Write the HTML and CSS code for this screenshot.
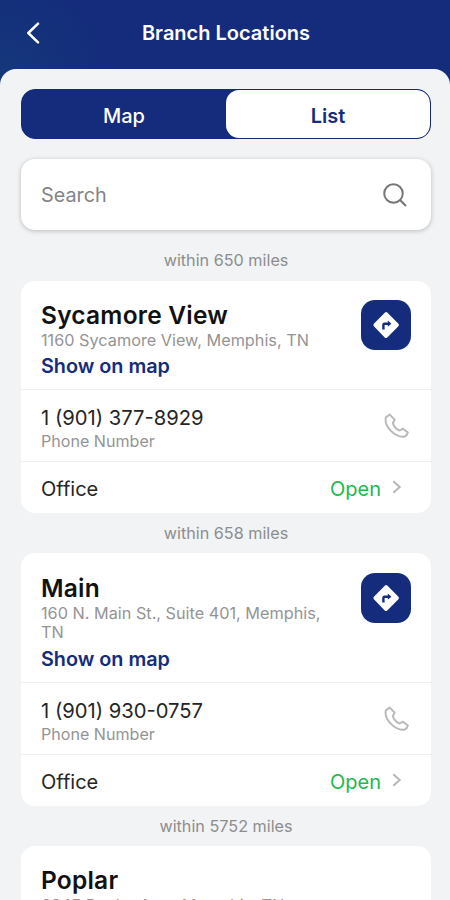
FILE: index.html
```html
<!DOCTYPE html>
<html lang="en">
<head>
<meta charset="utf-8">
<title>Branch Locations</title>
<link rel="stylesheet" href="styles.css">
</head>
<body>
<svg class="defs" aria-hidden="true">
  <symbol id="directions" viewBox="0 0 50 50"><path d="M24 12.6 12.9 23.7q-1.2 1.3 0 2.6L23.7 37.4q1.3 1.2 2.6 0L37.4 26.3q1.2-1.3 0-2.6L26.3 12.6q-1.2-1.1-2.3 0z" fill="#fff"/><path d="M22.4 29.5v-4.6q0-1.2 1.2-1.2h4" fill="none" stroke="#142c7b" stroke-width="2.4"/><path d="M26.8 20.6 30.4 23.7 26.8 26.8z" fill="#142c7b"/></symbol>
  <symbol id="phone" viewBox="0 0 24 24"><path d="M5.5 1.5 1.8 4.2C-.2 12.6 10.8 24.2 20 22.5q2.2-1 2.9-3.8l-4.6-3.6-3.2 1.7c-2.8-1-5.8-4.2-6.6-7l1.7-3.4z" fill="none" stroke="#b9b9b9" stroke-width="1.9" stroke-linejoin="round"/></symbol>
  <symbol id="chevron" viewBox="0 0 10 14"><path d="m1.3 1.3 6.4 5.7-6.4 5.7" fill="none" stroke="#b7b7b7" stroke-width="2"/></symbol>
</svg>
<div class="screen">
  <header class="header">
    <svg class="back" viewBox="0 0 14 22"><path d="m12 1.7-9.7 9.3 9.7 9.3" fill="none" stroke="#fff" stroke-width="2.5" stroke-linecap="round" stroke-linejoin="round"/></svg>
    <h1>Branch Locations</h1>
  </header>
  <main class="sheet">
    <div class="tabs"><div class="tab">Map</div><div class="tab active">List</div></div>
    <div class="search"><span>Search</span><svg viewBox="0 0 24 24"><circle cx="10.5" cy="10.5" r="9.3" fill="none" stroke="#777" stroke-width="2"/><path d="m17 17 6 6" stroke="#777" stroke-width="2.1"/></svg></div>

    <p class="distance">within 650 miles</p>
    <section class="card">
      <div class="place">
        <div><h2>Sycamore View</h2><p class="address">1160 Sycamore View, Memphis, TN</p><a class="link">Show on map</a></div>
        <span class="go"><svg><use href="#directions"/></svg></span>
      </div>
      <div class="row phone"><div><p class="number">1 (901) 377-8929</p><p class="caption">Phone Number</p></div><svg><use href="#phone"/></svg></div>
      <div class="row office"><span>Office</span><span class="open">Open</span><svg><use href="#chevron"/></svg></div>
    </section>

    <p class="distance">within 658 miles</p>
    <section class="card">
      <div class="place">
        <div><h2>Main</h2><p class="address">160 N. Main St., Suite 401, Memphis, TN</p><a class="link">Show on map</a></div>
        <span class="go"><svg><use href="#directions"/></svg></span>
      </div>
      <div class="row phone"><div><p class="number">1 (901) 930-0757</p><p class="caption">Phone Number</p></div><svg><use href="#phone"/></svg></div>
      <div class="row office"><span>Office</span><span class="open">Open</span><svg><use href="#chevron"/></svg></div>
    </section>

    <p class="distance">within 5752 miles</p>
    <section class="card">
      <div class="place">
        <div><h2>Poplar</h2><p class="address">6245 Poplar Ave., Memphis, TN</p></div>
      </div>
    </section>
  </main>
</div>
</body>
</html>
```
FILE: styles.css
```css
* { box-sizing: border-box; }
body, h1, h2, p { margin: 0; }
body { font-family: Inter, "Liberation Sans", sans-serif; background: #142c7b; }
svg { display: block; flex: none; }
.defs { width: 0; height: 0; position: absolute; }
.screen { height: 900px; overflow: hidden; background: radial-gradient(circle at 0 80px, #15387b, #142c7b 110px); }
.header { height: 69px; display: grid; grid-template-columns: 60px 1fr 60px; align-items: center; padding-bottom: 4px; }
.back { width: 14px; height: 22px; margin-left: 26px; }
h1 { color: #fff; font-size: 20px; font-weight: 600; text-align: center; white-space: nowrap; line-height: 24px; padding-left: 2px; }
.sheet { height: 831px; overflow: hidden; padding: 20px 19px 0 21px; background: #f1f3f5; border-radius: 16px 16px 0 0; }
.tabs { display: flex; height: 50px; border: 1px solid #142c7b; border-radius: 14px; background: #142c7b; overflow: hidden; }
.tab { flex: 1; display: flex; align-items: center; justify-content: center; color: #fff; font-size: 20px; font-weight: 500; padding-top: 3px; }
.active { background: #fff; color: #142c7b; border-radius: 13px; font-weight: 600; }
.search { height: 71px; margin-top: 20px; padding: 0 24px 0 20px; display: flex; align-items: center; justify-content: space-between; background: #fff; border-radius: 14px; color: #848484; font-size: 19.8px; box-shadow: 0 1px 5px rgba(0,0,0,.23); }
.search svg { width: 24px; height: 24px; }
.distance { height: 40px; line-height: 41px; text-align: center; font-size: 16.2px; color: #8d8d8d; }
.search + .distance { height: 51px; line-height: 60px; }
.card { background: #fff; border-radius: 14px; }
.place { display: flex; justify-content: space-between; padding: 20px 20px 11px; }
h2 { font-size: 24.5px; line-height: 29px; padding-bottom: 1px; font-weight: 600; letter-spacing: .22px; color: #111; }
.address { font-size: 16.25px; line-height: 19px; color: #949494; width: 290px; padding-bottom: 1px; }
.link { display: block; margin-top: 3px; font-size: 19.8px; line-height: 24px; font-weight: 600; color: #142c7b; }
.go { flex: none; width: 50px; height: 50px; margin-top: -1px; border-radius: 14px; background: #142c7b; }
.go svg { width: 50px; height: 50px; }
.row { display: flex; align-items: center; border-top: 1px solid #eeeff1; padding: 0 20px; }
.phone { height: 72px; justify-content: space-between; padding-right: 22px; }
.phone > div { padding-top: 5px; }
.phone svg { width: 25px; height: 25px; }
.number { font-size: 20.2px; line-height: 25px; color: #252525; }
.caption { font-size: 16.1px; line-height: 22px; color: #949494; }
.office { height: 52px; font-size: 20px; color: #252525; padding-top: 3px; }
.open { margin-left: auto; color: #22b84d; }
.office svg { width: 10px; height: 14px; margin: 0 9px 4px 11px; }
.card:nth-of-type(2) .place { padding-top: 21px; padding-bottom: 12px; }
.card:nth-of-type(2) .link { margin-top: 4px; margin-bottom: -1px; }
```
